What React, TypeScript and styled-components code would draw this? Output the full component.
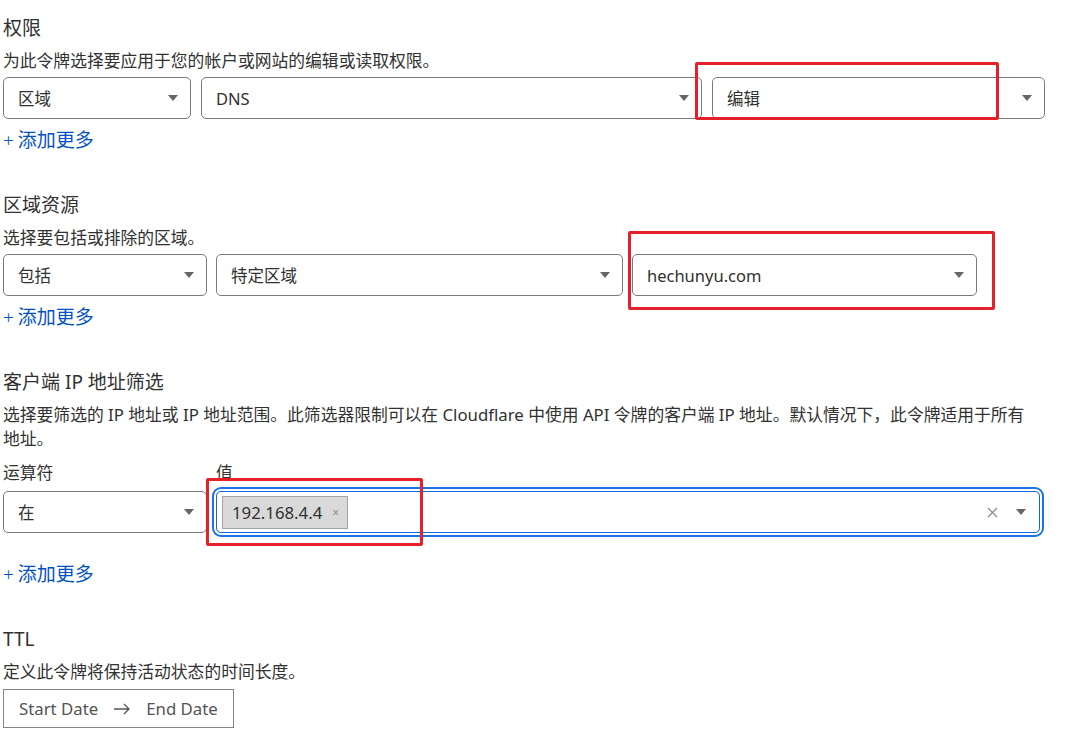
import styled, { createGlobalStyle } from 'styled-components'

const GlobalStyle = createGlobalStyle`
  body {
    margin: 0;
    background: #fff;
    color: #313131;
    font-family: "Noto Sans", "Noto Sans CJK SC", sans-serif;
  }
`

const Page = styled.div`
  width: 1045px;
  padding: 15px 0 0 3px;
`

const Section = styled.section`
  margin-bottom: 40px;

  &:last-child {
    margin-bottom: 0;
  }
`

const Heading = styled.h3`
  margin: 0;
  font-size: 19px;
  font-weight: 400;
  line-height: 26px;
`

const Desc = styled.p`
  max-width: 1032px;
  margin: 8px 0 0;
  font-size: 16.8px;
  line-height: 24px;
`

const Row = styled.div<{ $mt?: number; $gap?: number }>`
  position: relative;
  display: flex;
  align-items: center;
  gap: ${p => p.$gap ?? 9}px;
  margin-top: ${p => p.$mt ?? 4}px;
`

const LabelRow = styled.div`
  display: flex;
  gap: 9px;
  margin-top: 10px;
`

const FieldLabel = styled.div<{ $w: number }>`
  width: ${p => p.$w}px;
  font-size: 16.8px;
  line-height: 24px;
`

const Select = styled.div<{ $w: number }>`
  box-sizing: border-box;
  width: ${p => p.$w}px;
  height: 42px;
  flex-shrink: 0;
  display: flex;
  align-items: center;
  padding: 0 12px 0 14px;
  border: 1px solid #7b7b7b;
  border-radius: 5px;
  font-size: 16.5px;
  background: #fff;
`

const Value = styled.span`
  flex: 1;
  white-space: nowrap;
`

const Caret = styled.span`
  width: 0;
  height: 0;
  border-left: 5px solid transparent;
  border-right: 5px solid transparent;
  border-top: 6px solid #666;
`

const MultiInput = styled.div<{ $w: number }>`
  box-sizing: border-box;
  width: ${p => p.$w}px;
  height: 42px;
  display: flex;
  align-items: center;
  gap: 18px;
  padding: 0 13px 0 5px;
  border: 1px solid #0b68e6;
  border-radius: 5px;
  box-shadow: 0 0 0 2px #fff, 0 0 0 4px #1a73e8;
`

const Tag = styled.div`
  display: flex;
  align-items: center;
  gap: 10px;
  height: 33px;
  box-sizing: border-box;
  padding: 0 8px 0 9px;
  background: #d9d9d9;
  border: 1px solid #a3a3a3;
  font-size: 16.8px;
  color: #313131;
`

const TagClose = styled.span`
  font-size: 12px;
  color: #8a8a8a;
`

const Spacer = styled.div`
  flex: 1;
`

const AddMore = styled.div<{ $mt?: number }>`
  margin-top: ${p => p.$mt ?? 9}px;
  font-size: 19px;
  line-height: 24px;
  color: #0051c3;
`

const Plus = styled.span`
  font-weight: 300;
  margin-right: 4px;
`

const Annotation = styled.div<{ $x: number; $y: number; $w: number; $h: number }>`
  position: absolute;
  left: ${p => p.$x}px;
  top: ${p => p.$y}px;
  width: ${p => p.$w}px;
  height: ${p => p.$h}px;
  box-sizing: border-box;
  border: 3px solid #e5202b;
  border-radius: 2px;
  pointer-events: none;
`

const DateRange = styled.div`
  box-sizing: border-box;
  width: 231px;
  height: 39px;
  margin-top: 5px;
  display: flex;
  align-items: center;
  gap: 15px;
  padding: 0 15px;
  border: 1px solid #858585;
  font-size: 16.8px;
  color: #555;
  white-space: nowrap;
`

const Arrow = () => (
  <svg width="18" height="12" viewBox="0 0 18 12" fill="none" stroke="#555" strokeWidth="1.3">
    <path d="M1 6h15M11 1l5 5-5 5" />
  </svg>
)

const ClearIcon = () => (
  <svg width="11" height="11" viewBox="0 0 11 11" stroke="#8a8a8a" strokeWidth="1.2">
    <path d="M1 1l9 9M10 1l-9 9" />
  </svg>
)

export default function App() {
  return (
    <>
      <GlobalStyle />
      <Page>
        <Section>
          <Heading>权限</Heading>
          <Desc>为此令牌选择要应用于您的帐户或网站的编辑或读取权限。</Desc>
          <Row $gap={10}>
            <Select $w={188}><Value>区域</Value><Caret /></Select>
            <Select $w={501}><Value>DNS</Value><Caret /></Select>
            <Select $w={333}><Value>编辑</Value><Caret /></Select>
            <Annotation $x={692} $y={-15} $w={304} $h={58} />
          </Row>
          <AddMore><Plus>+</Plus>添加更多</AddMore>
        </Section>

        <Section>
          <Heading>区域资源</Heading>
          <Desc>选择要包括或排除的区域。</Desc>
          <Row>
            <Select $w={204}><Value>包括</Value><Caret /></Select>
            <Select $w={407}><Value>特定区域</Value><Caret /></Select>
            <Select $w={345}><Value>hechunyu.com</Value><Caret /></Select>
            <Annotation $x={625} $y={-23} $w={367} $h={79} />
          </Row>
          <AddMore><Plus>+</Plus>添加更多</AddMore>
        </Section>

        <Section>
          <Heading>客户端 IP 地址筛选</Heading>
          <Desc>
            选择要筛选的 IP 地址或 IP 地址范围。此筛选器限制可以在 Cloudflare 中使用 API 令牌的客户端 IP 地址。默认情况下，此令牌适用于所有地址。
          </Desc>
          <LabelRow>
            <FieldLabel $w={204}>运算符</FieldLabel>
            <FieldLabel $w={400}>值</FieldLabel>
          </LabelRow>
          <Row $mt={6}>
            <Select $w={204}><Value>在</Value><Caret /></Select>
            <MultiInput $w={824}>
              <Tag>192.168.4.4<TagClose>×</TagClose></Tag>
              <Spacer />
              <ClearIcon />
              <Caret />
            </MultiInput>
            <Annotation $x={203} $y={-13} $w={217} $h={68} />
          </Row>
          <AddMore $mt={29}><Plus>+</Plus>添加更多</AddMore>
        </Section>

        <Section>
          <Heading>TTL</Heading>
          <Desc>定义此令牌将保持活动状态的时间长度。</Desc>
          <DateRange>
            <span>Start Date</span>
            <Arrow />
            <span>End Date</span>
          </DateRange>
        </Section>
      </Page>
    </>
  )
}
